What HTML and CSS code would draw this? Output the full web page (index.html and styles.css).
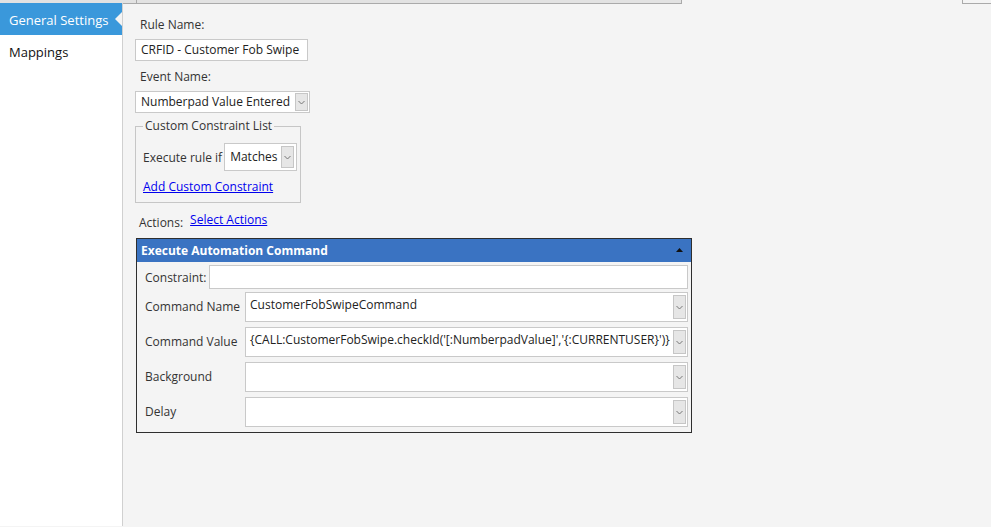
FILE: index.html
```html
<!DOCTYPE html>
<html>
<head>
<meta charset="utf-8">
<link rel="stylesheet" href="styles.css">
</head>
<body>
<div class="topbar">
  <div class="tb-left"><div class="tb-a"></div><div class="tb-b"></div></div>
  <div class="tb-gap"></div>
  <div class="tb-right"></div>
</div>
<div class="app">
  <nav class="sidebar">
    <div class="nav-item active">General Settings</div>
    <div class="nav-item">Mappings</div>
  </nav>
  <main class="main">
    <div class="label first">Rule Name:</div>
    <div class="textbox rule">CRFID - Customer Fob Swipe</div>
    <div class="label">Event Name:</div>
    <div class="select event"><span class="sel-text">Numberpad Value Entered</span><span class="dd"><svg width="7" height="5" viewBox="0 0 7 5"><polyline points="0.5,1 3.5,4 6.5,1" fill="none" stroke="#777" stroke-width="1"/></svg></span></div>
    <fieldset class="constraints">
      <legend>Custom Constraint List</legend>
      <div class="exec-row">
        <span class="exec-label">Execute rule if</span>
        <div class="select matches"><span class="sel-text">Matches</span><span class="dd"><svg width="7" height="5" viewBox="0 0 7 5"><polyline points="0.5,1 3.5,4 6.5,1" fill="none" stroke="#777" stroke-width="1"/></svg></span></div>
      </div>
      <a class="link add" href="#">Add Custom Constraint</a>
    </fieldset>
    <div class="actions-row">
      <span class="actions-label">Actions:</span>
      <a class="link select-actions" href="#">Select Actions</a>
    </div>
    <section class="panel">
      <div class="panel-head">
        <span>Execute Automation Command</span>
        <svg class="collapse" width="7" height="4" viewBox="0 0 7 4"><polygon points="0,4 3.5,0 7,4" fill="#111"/></svg>
      </div>
      <div class="panel-body">
        <div class="constraint-row">
          <span class="c-label">Constraint:</span>
          <div class="textbox constraint"></div>
        </div>
        <div class="param-grid">
          <span class="p-label">Command Name</span>
          <div class="combo"><span class="combo-text">CustomerFobSwipeCommand</span><span class="dd2"><svg width="7" height="5" viewBox="0 0 7 5"><polyline points="0.5,1 3.5,4 6.5,1" fill="none" stroke="#777" stroke-width="1"/></svg></span></div>
          <span class="p-label">Command Value</span>
          <div class="combo"><span class="combo-text value">{CALL:CustomerFobSwipe.checkId('[:NumberpadValue]','{:CURRENTUSER}')}</span><span class="dd2"><svg width="7" height="5" viewBox="0 0 7 5"><polyline points="0.5,1 3.5,4 6.5,1" fill="none" stroke="#777" stroke-width="1"/></svg></span></div>
          <span class="p-label">Background</span>
          <div class="combo"><span class="combo-text"></span><span class="dd2"><svg width="7" height="5" viewBox="0 0 7 5"><polyline points="0.5,1 3.5,4 6.5,1" fill="none" stroke="#777" stroke-width="1"/></svg></span></div>
          <span class="p-label">Delay</span>
          <div class="combo"><span class="combo-text"></span><span class="dd2"><svg width="7" height="5" viewBox="0 0 7 5"><polyline points="0.5,1 3.5,4 6.5,1" fill="none" stroke="#777" stroke-width="1"/></svg></span></div>
        </div>
      </div>
    </section>
  </main>
</div>
</body>
</html>
```

FILE: styles.css
```css
* { box-sizing: border-box; }
html, body {
  margin: 0;
  height: 100%;
  background: #f4f4f4;
  font-family: "Open Sans", "Noto Sans", sans-serif;
  font-size: 12px;
  color: #333;
  overflow: hidden;
}
.topbar {
  display: flex;
  height: 4px;
  background: #f4f4f4;
}
.tb-left {
  width: 682px;
  display: flex;
  background: #e2e2e2;
  border-bottom: 1px solid #aaa;
  border-right: 1px solid #aaa;
}
.tb-a { width: 137px; border-right: 1px solid #aaa; }
.tb-b { flex: 1; }
.tb-gap { flex: 1; }
.tb-right {
  width: 29px;
  background: #f4f4f4;
  border-left: 1px solid #aaa;
  border-bottom: 1px solid #aaa;
}
.app {
  display: flex;
  height: 523px;
  margin-top: -1px;
}
.sidebar {
  width: 123px;
  background: #fff;
  border-right: 1px solid #d0d0d0;
  padding-top: 0;
  flex-shrink: 0;
}
.nav-item {
  position: relative;
  height: 32px;
  line-height: 34px;
  padding-left: 9px;
  font-size: 13px;
  color: #111;
}
.nav-item.active {
  background: #3a98db;
  color: #fff;
}
.nav-item.active::after {
  content: "";
  position: absolute;
  right: 0;
  top: 9px;
  border-style: solid;
  border-width: 7px 7px 7px 0;
  border-color: transparent #f4f4f4 transparent transparent;
}
.main {
  flex: 1;
  padding-left: 12px;
  padding-top: 0;
}
.label {
  line-height: 16px;
  padding-left: 5px;
  margin-top: 8px;
  margin-bottom: 6px;
}
.label.first { margin-top: 14px; }
.textbox {
  background: #fff;
  border: 1px solid #c9c9c9;
  height: 22px;
  line-height: 20px;
  padding-left: 5px;
  color: #222;
}
.textbox.rule { width: 173px; }
.select {
  display: flex;
  align-items: stretch;
  background: #fff;
  border: 1px solid #c9c9c9;
  height: 22px;
  padding: 1px;
}
.select.event { width: 175px; }
.sel-text {
  flex: 1;
  line-height: 18px;
  padding-left: 4px;
  color: #222;
  white-space: nowrap;
}
.dd, .dd2 {
  width: 13px;
  background: #e6e6e6;
  border: 1px solid #c6c6c6;
  display: flex;
  align-items: center;
  justify-content: center;
}
.constraints {
  margin: 5px 0 0 0;
  width: 166px;
  min-width: 0;
  border: 1px solid #c6c6c6;
  padding: 1px 3px 7px 7px;
}
.constraints legend {
  padding: 0 2px;
  line-height: 16px;
  margin-left: 0;
  color: #333;
}
.exec-row {
  display: flex;
  align-items: center;
  gap: 2px;
  margin-top: 8px;
}
.exec-label { white-space: nowrap; }
.select.matches {
  width: 73px;
  height: 28px;
  padding: 2px;
  flex-shrink: 0;
}
.select.matches .sel-text { line-height: 22px; padding-left: 3px; }
.link {
  color: #0000ee;
  text-decoration: underline;
}
.link.add {
  display: block;
  margin-top: 8px;
  line-height: 16px;
}
.actions-row {
  display: flex;
  align-items: flex-start;
  margin-top: 9px;
  padding-left: 4px;
  gap: 7px;
}
.actions-label { line-height: 16px; margin-top: 3px; }
.select-actions { line-height: 16px; }
.panel {
  margin-top: 7px;
  margin-left: 1px;
  width: 556px;
  border: 1px solid #2e2e2e;
  background: #f4f4f4;
}
.panel-head {
  display: flex;
  align-items: center;
  justify-content: space-between;
  height: 23px;
  background: #3a73c2;
  color: #fff;
  font-weight: bold;
  padding: 0 8px 0 4px;
}
.panel-head .collapse { margin-top: -1px; }
.panel-body {
  padding: 3px 3px 5px 8px;
}
.constraint-row {
  display: flex;
  align-items: center;
  gap: 2px;
}
.c-label { white-space: nowrap; }
.textbox.constraint { flex: 1; height: 24px; }
.param-grid {
  display: grid;
  grid-template-columns: 100px 1fr;
  grid-auto-rows: 30px;
  row-gap: 5px;
  margin-top: 3px;
  align-items: center;
}
.p-label { padding-left: 0; line-height: 16px; }
.combo {
  display: flex;
  height: 30px;
  background: #fff;
  border: 1px solid #c9c9c9;
  padding: 2px 1px 2px 2px;
}
.combo-text {
  flex: 1;
  padding-left: 2px;
  line-height: 20px;
  color: #222;
  white-space: nowrap;
  overflow: hidden;
}
.combo-text.value { color: #222; }
.dd2 { width: 13px; }
```
